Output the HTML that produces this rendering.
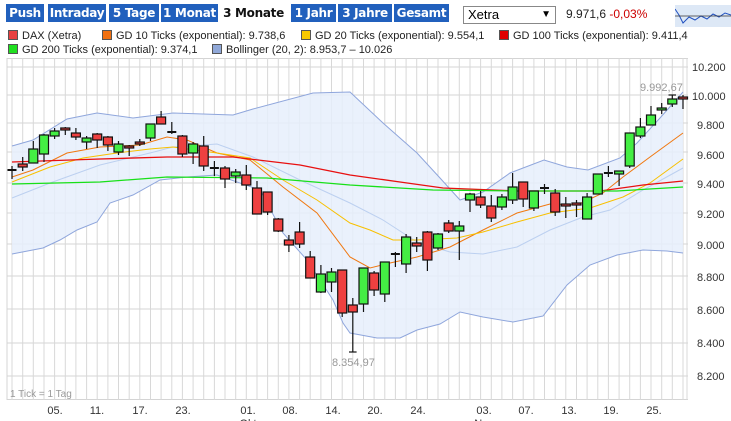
<!DOCTYPE html>
<html><head><meta charset="utf-8"><style>
body{margin:0;width:731px;height:421px;background:#fff;overflow:hidden;font-family:"Liberation Sans",Arial,sans-serif;position:relative}
.b{position:absolute;top:4px;height:18px;background:#2160bd;color:#fff;font-weight:bold;font-size:12px;line-height:18px;text-align:center;font-family:"DejaVu Sans","Liberation Sans",sans-serif;letter-spacing:-0.3px}
.b.a{background:#fff;color:#111}
.lg{position:absolute;font-size:11px;color:#222;white-space:nowrap}
.lg i{display:inline-block;width:8px;height:8px;border:1px solid #555;margin-right:4px;vertical-align:-1px}
</style></head><body>
<div class="b" style="left:6px;width:38px">Push</div>
<div class="b" style="left:48px;width:58px">Intraday</div>
<div class="b" style="left:109px;width:50px">5 Tage</div>
<div class="b" style="left:161px;width:57px">1 Monat</div>
<div class="b a" style="left:220px;width:67px">3 Monate</div>
<div class="b" style="left:291px;width:45px">1 Jahr</div>
<div class="b" style="left:338px;width:54px">3 Jahre</div>
<div class="b" style="left:394px;width:55px">Gesamt</div>
<div style="position:absolute;left:463px;top:6px;width:87px;height:16px;border:1px solid #888;font-size:13px;line-height:16px;padding-left:4px;box-sizing:content-box">Xetra<span style="position:absolute;right:4px;font-size:10px">▼</span></div>
<div style="position:absolute;left:566px;top:7px;font-size:12px;color:#222">9.971,6 <span style="color:#c00">-0,03%</span></div>
<svg style="position:absolute;left:675px;top:5px" width="56" height="22"><rect width="56" height="22" fill="#dde8f6"/><polyline points="0,4 4,10 8,18 14,12 20,15 26,11 32,14 38,9 44,12 50,8 56,10" fill="none" stroke="#2050c0" stroke-width="1"/><line x1="0" y1="11" x2="56" y2="11" stroke="#333" stroke-width="0.7"/></svg>
<div class="lg" style="left:8px;top:30px"><i style="background:#e84040"></i>DAX (Xetra)</div>
<div class="lg" style="left:102px;top:30px"><i style="background:#f07010"></i>GD 10 Ticks (exponential): 9.738,6</div>
<div class="lg" style="left:301px;top:30px"><i style="background:#f8c800"></i>GD 20 Ticks (exponential): 9.554,1</div>
<div class="lg" style="left:499px;top:30px"><i style="background:#e00000"></i>GD 100 Ticks (exponential): 9.411,4</div>
<div class="lg" style="left:8px;top:44px"><i style="background:#20e020"></i>GD 200 Ticks (exponential): 9.374,1</div>
<div class="lg" style="left:212px;top:44px"><i style="background:#90a8d8"></i>Bollinger (20, 2): 8.953,7 – 10.026</div>
<svg style="position:absolute;left:0;top:0" width="731" height="421" font-family="Liberation Sans,Arial,sans-serif">
<g stroke="#d4d4d4" stroke-width="1">
<line x1="7" y1="58" x2="7" y2="400"/>
<line x1="7" y1="399.5" x2="688" y2="399.5"/>
<line x1="7" y1="58.5" x2="688" y2="58.5"/>
<line x1="7" y1="67" x2="688" y2="67"/><line x1="7" y1="95" x2="688" y2="95"/><line x1="7" y1="123" x2="688" y2="123"/><line x1="7" y1="152" x2="688" y2="152"/><line x1="7" y1="183" x2="688" y2="183"/><line x1="7" y1="213" x2="688" y2="213"/><line x1="7" y1="244" x2="688" y2="244"/><line x1="7" y1="276" x2="688" y2="276"/><line x1="7" y1="309" x2="688" y2="309"/><line x1="7" y1="343" x2="688" y2="343"/><line x1="7" y1="376" x2="688" y2="376"/>
</g>
<g stroke="#d8d8d8" stroke-width="1">
<line x1="12" y1="58" x2="12" y2="400"/><line x1="22.7" y1="58" x2="22.7" y2="400"/><line x1="33.3" y1="58" x2="33.3" y2="400"/><line x1="44" y1="58" x2="44" y2="400"/><line x1="54.6" y1="58" x2="54.6" y2="400"/><line x1="65.3" y1="58" x2="65.3" y2="400"/><line x1="75.9" y1="58" x2="75.9" y2="400"/><line x1="86.6" y1="58" x2="86.6" y2="400"/><line x1="97.2" y1="58" x2="97.2" y2="400"/><line x1="107.9" y1="58" x2="107.9" y2="400"/><line x1="118.5" y1="58" x2="118.5" y2="400"/><line x1="129.2" y1="58" x2="129.2" y2="400"/><line x1="139.8" y1="58" x2="139.8" y2="400"/><line x1="150.5" y1="58" x2="150.5" y2="400"/><line x1="161.1" y1="58" x2="161.1" y2="400"/><line x1="171.8" y1="58" x2="171.8" y2="400"/><line x1="182.4" y1="58" x2="182.4" y2="400"/><line x1="193.1" y1="58" x2="193.1" y2="400"/><line x1="203.7" y1="58" x2="203.7" y2="400"/><line x1="214.4" y1="58" x2="214.4" y2="400"/><line x1="225" y1="58" x2="225" y2="400"/><line x1="235.7" y1="58" x2="235.7" y2="400"/><line x1="246.3" y1="58" x2="246.3" y2="400"/><line x1="257" y1="58" x2="257" y2="400"/><line x1="267.6" y1="58" x2="267.6" y2="400"/><line x1="278.3" y1="58" x2="278.3" y2="400"/><line x1="288.9" y1="58" x2="288.9" y2="400"/><line x1="299.6" y1="58" x2="299.6" y2="400"/><line x1="310.2" y1="58" x2="310.2" y2="400"/><line x1="320.9" y1="58" x2="320.9" y2="400"/><line x1="331.5" y1="58" x2="331.5" y2="400"/><line x1="342.2" y1="58" x2="342.2" y2="400"/><line x1="352.8" y1="58" x2="352.8" y2="400"/><line x1="363.5" y1="58" x2="363.5" y2="400"/><line x1="374.1" y1="58" x2="374.1" y2="400"/><line x1="384.8" y1="58" x2="384.8" y2="400"/><line x1="395.4" y1="58" x2="395.4" y2="400"/><line x1="406.1" y1="58" x2="406.1" y2="400"/><line x1="416.7" y1="58" x2="416.7" y2="400"/><line x1="427.4" y1="58" x2="427.4" y2="400"/><line x1="438" y1="58" x2="438" y2="400"/><line x1="448.7" y1="58" x2="448.7" y2="400"/><line x1="459.3" y1="58" x2="459.3" y2="400"/><line x1="470" y1="58" x2="470" y2="400"/><line x1="480.6" y1="58" x2="480.6" y2="400"/><line x1="491.3" y1="58" x2="491.3" y2="400"/><line x1="501.9" y1="58" x2="501.9" y2="400"/><line x1="512.6" y1="58" x2="512.6" y2="400"/><line x1="523.2" y1="58" x2="523.2" y2="400"/><line x1="533.9" y1="58" x2="533.9" y2="400"/><line x1="544.5" y1="58" x2="544.5" y2="400"/><line x1="555.2" y1="58" x2="555.2" y2="400"/><line x1="565.8" y1="58" x2="565.8" y2="400"/><line x1="576.5" y1="58" x2="576.5" y2="400"/><line x1="587.1" y1="58" x2="587.1" y2="400"/><line x1="597.8" y1="58" x2="597.8" y2="400"/><line x1="608.4" y1="58" x2="608.4" y2="400"/><line x1="619.1" y1="58" x2="619.1" y2="400"/><line x1="629.7" y1="58" x2="629.7" y2="400"/><line x1="640.4" y1="58" x2="640.4" y2="400"/><line x1="651" y1="58" x2="651" y2="400"/><line x1="661.7" y1="58" x2="661.7" y2="400"/><line x1="672.3" y1="58" x2="672.3" y2="400"/><line x1="683" y1="58" x2="683" y2="400"/><line x1="687" y1="58" x2="687" y2="400"/>
</g>
<!-- bollinger band -->
<polygon fill="#e6effb" fill-opacity="0.85" stroke="none" points="12,146 33,140 67,119 97,113 133,118 173,113 233,115 253,109 313,93 350,92 383,123 417,153 440,178 460,200 483,192 510,173 544,160 567,167 588,170 620,158 637,143 660,118 683,92 683,253 667,251 643,250 617,255 590,265 567,285 543,316 513,322 483,317 460,312 440,324 417,330 400,338 377,338 350,333 343,323 333,300 307,260 283,233 260,190 217,175 187,177 160,180 133,195 110,203 97,222 77,230 60,240 43,248 12,254"/>
<g fill="none" stroke-width="1">
<polyline stroke="#8fa6dc" points="12,146 33,140 67,119 97,113 133,118 173,113 233,115 253,109 313,93 350,92 383,123 417,153 440,178 460,200 483,192 510,173 544,160 567,167 588,170 620,158 637,143 660,118 683,92"/>
<polyline stroke="#8fa6dc" points="12,254 43,248 60,240 77,230 97,222 110,203 133,195 160,180 187,177 217,175 260,190 283,233 307,260 333,300 343,323 350,333 377,338 400,338 417,330 440,324 460,312 483,317 513,322 543,316 567,285 590,265 617,255 643,250 667,251 683,253"/>
<polyline stroke="#bcd0f0" points="12,198 50,183 100,165 150,153 173,147 217,144 253,157 300,180 350,203 383,220 417,242 450,252 483,254 517,247 550,230 583,217 610,210 643,190 683,168"/>
<polyline stroke="#f07810" points="12,177 33,170 67,153 100,147 140,145 167,137 187,140 217,153 250,160 283,187 317,213 350,257 370,268 390,263 417,257 450,247 483,230 517,213 550,204 577,205 603,193 623,177 650,157 683,133"/>
<polyline stroke="#f8c000" points="12,182 50,167 83,158 117,153 150,149 173,147 217,153 250,158 283,180 317,200 350,223 370,230 393,240 417,240 457,238 483,232 517,222 550,213 590,208 623,197 650,183 683,159"/>
<polyline stroke="#e81010" stroke-width="1.3" points="12,162 100,159 167,157 233,157 300,165 350,175 400,182 443,188 517,191 600,191 643,185 683,181"/>
<polyline stroke="#18e018" stroke-width="1.3" points="12,184 100,182 167,177 267,178 350,185 433,190 517,191 617,191 683,187"/>
</g>
<!-- candles -->
<g stroke="#111" stroke-width="1.2">
<line x1="12" y1="166" x2="12" y2="179"/><line x1="7.5" y1="170" x2="16.5" y2="170" stroke-width="2"/>
<line x1="22.7" y1="157" x2="22.7" y2="171"/><rect x="18.2" y="164" width="9" height="3" fill="#ee4040"/>
<line x1="33.3" y1="141" x2="33.3" y2="163"/><rect x="28.8" y="149" width="9" height="14" fill="#44ee44"/>
<line x1="44" y1="134" x2="44" y2="162"/><rect x="39.5" y="135" width="9" height="19" fill="#44ee44"/>
<line x1="54.6" y1="128" x2="54.6" y2="139"/><rect x="50.1" y="131" width="9" height="5" fill="#44ee44"/>
<line x1="65.3" y1="127" x2="65.3" y2="135"/><rect x="60.8" y="128" width="9" height="2" fill="#ee4040"/>
<line x1="75.9" y1="128" x2="75.9" y2="140"/><rect x="71.4" y="133" width="9" height="4" fill="#ee4040"/>
<line x1="86.6" y1="136" x2="86.6" y2="149"/><rect x="82.1" y="138" width="9" height="4" fill="#44ee44"/>
<line x1="97.2" y1="133" x2="97.2" y2="148"/><rect x="92.7" y="134" width="9" height="6" fill="#ee4040"/>
<line x1="107.9" y1="136" x2="107.9" y2="151"/><rect x="103.4" y="137" width="9" height="8" fill="#ee4040"/>
<line x1="118.5" y1="141" x2="118.5" y2="155"/><rect x="114" y="144" width="9" height="8" fill="#44ee44"/>
<line x1="129.2" y1="145" x2="129.2" y2="156"/><rect x="124.7" y="146" width="9" height="2" fill="#ee4040"/>
<line x1="139.8" y1="139" x2="139.8" y2="146"/><rect x="135.3" y="142" width="9" height="2" fill="#ee4040"/>
<line x1="150.5" y1="124" x2="150.5" y2="141"/><rect x="146" y="124" width="9" height="14" fill="#44ee44"/>
<line x1="161.1" y1="111" x2="161.1" y2="124"/><rect x="156.6" y="117" width="9" height="7" fill="#ee4040"/>
<line x1="171.8" y1="122" x2="171.8" y2="134"/><line x1="167.3" y1="132" x2="176.3" y2="132" stroke-width="2"/>
<line x1="182.4" y1="135" x2="182.4" y2="157"/><rect x="177.9" y="136" width="9" height="18" fill="#ee4040"/>
<line x1="193.1" y1="142" x2="193.1" y2="164"/><rect x="188.6" y="144" width="9" height="9" fill="#44ee44"/>
<line x1="203.7" y1="136" x2="203.7" y2="171"/><rect x="199.2" y="146" width="9" height="20" fill="#ee4040"/>
<line x1="214.4" y1="161" x2="214.4" y2="176"/><line x1="209.9" y1="168" x2="218.9" y2="168" stroke-width="2"/>
<line x1="225" y1="166" x2="225" y2="188"/><rect x="220.5" y="168" width="9" height="11" fill="#ee4040"/>
<line x1="235.7" y1="169" x2="235.7" y2="183"/><rect x="231.2" y="172" width="9" height="4" fill="#44ee44"/>
<line x1="246.3" y1="165" x2="246.3" y2="190"/><rect x="241.8" y="175" width="9" height="10" fill="#ee4040"/>
<line x1="257" y1="181" x2="257" y2="214"/><rect x="252.5" y="188" width="9" height="26" fill="#ee4040"/>
<line x1="267.6" y1="192" x2="267.6" y2="215"/><rect x="263.1" y="192" width="9" height="20" fill="#ee4040"/>
<line x1="278.3" y1="218" x2="278.3" y2="232"/><rect x="273.8" y="219" width="9" height="12" fill="#ee4040"/>
<line x1="288.9" y1="235" x2="288.9" y2="252"/><rect x="284.4" y="240" width="9" height="5" fill="#ee4040"/>
<line x1="299.6" y1="222" x2="299.6" y2="248"/><rect x="295.1" y="232" width="9" height="12" fill="#ee4040"/>
<line x1="310.2" y1="251" x2="310.2" y2="278"/><rect x="305.7" y="257" width="9" height="21" fill="#ee4040"/>
<line x1="320.9" y1="265" x2="320.9" y2="293"/><rect x="316.4" y="274" width="9" height="18" fill="#44ee44"/>
<line x1="331.5" y1="268" x2="331.5" y2="292"/><rect x="327" y="272" width="9" height="10" fill="#44ee44"/>
<line x1="342.2" y1="270" x2="342.2" y2="317"/><rect x="337.7" y="270" width="9" height="43" fill="#ee4040"/>
<line x1="352.8" y1="298" x2="352.8" y2="352"/><rect x="348.3" y="305" width="9" height="7" fill="#ee4040"/><line x1="349" y1="352" x2="356.6" y2="352"/>
<line x1="363.5" y1="268" x2="363.5" y2="312"/><rect x="359" y="268" width="9" height="36" fill="#44ee44"/>
<line x1="374.1" y1="271" x2="374.1" y2="296"/><rect x="369.6" y="273" width="9" height="17" fill="#ee4040"/>
<line x1="384.8" y1="262" x2="384.8" y2="302"/><rect x="380.3" y="262" width="9" height="32" fill="#44ee44"/>
<line x1="395.4" y1="252" x2="395.4" y2="267"/><line x1="390.9" y1="254" x2="399.9" y2="254" stroke-width="2"/>
<line x1="406.1" y1="234" x2="406.1" y2="273"/><rect x="401.6" y="237" width="9" height="27" fill="#44ee44"/>
<line x1="416.7" y1="237" x2="416.7" y2="252"/><rect x="412.2" y="243" width="9" height="3" fill="#ee4040"/>
<line x1="427.4" y1="231" x2="427.4" y2="271"/><rect x="422.9" y="232" width="9" height="28" fill="#ee4040"/>
<line x1="438" y1="233" x2="438" y2="250"/><rect x="433.5" y="234" width="9" height="14" fill="#44ee44"/>
<line x1="448.7" y1="220" x2="448.7" y2="233"/><rect x="444.2" y="223" width="9" height="8" fill="#ee4040"/>
<line x1="459.3" y1="221" x2="459.3" y2="260"/><rect x="454.8" y="226" width="9" height="5" fill="#44ee44"/>
<line x1="470" y1="193" x2="470" y2="212"/><rect x="465.5" y="194" width="9" height="6" fill="#44ee44"/>
<line x1="480.6" y1="191" x2="480.6" y2="208"/><rect x="476.1" y="197" width="9" height="8" fill="#ee4040"/>
<line x1="491.3" y1="195" x2="491.3" y2="222"/><rect x="486.8" y="206" width="9" height="12" fill="#ee4040"/>
<line x1="501.9" y1="194" x2="501.9" y2="210"/><rect x="497.4" y="197" width="9" height="10" fill="#44ee44"/>
<line x1="512.6" y1="173" x2="512.6" y2="204"/><rect x="508.1" y="187" width="9" height="13" fill="#44ee44"/>
<line x1="523.2" y1="182" x2="523.2" y2="207"/><rect x="518.7" y="182" width="9" height="17" fill="#ee4040"/>
<line x1="533.9" y1="191" x2="533.9" y2="211"/><rect x="529.4" y="191" width="9" height="17" fill="#44ee44"/>
<line x1="544.5" y1="184" x2="544.5" y2="194"/><line x1="540" y1="188" x2="549" y2="188" stroke-width="2"/>
<line x1="555.2" y1="189" x2="555.2" y2="216"/><rect x="550.7" y="193" width="9" height="19" fill="#ee4040"/>
<line x1="565.8" y1="197" x2="565.8" y2="218"/><rect x="561.3" y="204" width="9" height="2" fill="#ee4040"/>
<line x1="576.5" y1="200" x2="576.5" y2="217"/><rect x="572" y="203" width="9" height="2" fill="#ee4040"/>
<line x1="587.1" y1="193" x2="587.1" y2="219"/><rect x="582.6" y="197" width="9" height="22" fill="#44ee44"/>
<line x1="597.8" y1="174" x2="597.8" y2="194"/><rect x="593.3" y="174" width="9" height="20" fill="#44ee44"/>
<line x1="608.4" y1="166" x2="608.4" y2="177"/><line x1="603.9" y1="173" x2="612.9" y2="173" stroke-width="2"/>
<line x1="619.1" y1="171" x2="619.1" y2="186"/><rect x="614.6" y="171" width="9" height="3" fill="#44ee44"/>
<line x1="629.7" y1="133" x2="629.7" y2="168"/><rect x="625.2" y="133" width="9" height="33" fill="#44ee44"/>
<line x1="640.4" y1="118" x2="640.4" y2="138"/><rect x="635.9" y="127" width="9" height="9" fill="#44ee44"/>
<line x1="651" y1="106" x2="651" y2="125"/><rect x="646.5" y="115" width="9" height="10" fill="#44ee44"/>
<line x1="661.7" y1="103" x2="661.7" y2="114"/><rect x="657.2" y="108" width="9" height="2" fill="#44ee44"/>
<line x1="672.3" y1="95" x2="672.3" y2="107"/><rect x="667.8" y="99" width="9" height="5" fill="#44ee44"/><line x1="668.5" y1="95" x2="676" y2="95"/>
<line x1="683" y1="95" x2="683" y2="109"/><rect x="678.5" y="97" width="9" height="2" fill="#ee4040"/>
</g>
<g font-size="11" fill="#999">
<text x="640" y="91">9.992,67</text>
<text x="332" y="366">8.354,97</text>
<text x="10" y="397" font-size="10">1 Tick = 1 Tag</text>
</g>
<g font-size="11" fill="#333">
<text x="692" y="71">10.200</text><text x="692" y="100">10.000</text><text x="697" y="129">9.800</text><text x="697" y="159">9.600</text><text x="697" y="188">9.400</text><text x="697" y="218">9.200</text><text x="697" y="249">9.000</text><text x="697" y="281">8.800</text><text x="697" y="314">8.600</text><text x="697" y="347">8.400</text><text x="697" y="380">8.200</text>
</g>
<g font-size="11" fill="#333" text-anchor="middle">
<text x="55" y="414">05.</text><text x="97" y="414">11.</text><text x="140" y="414">17.</text><text x="183" y="414">23.</text><text x="248" y="414">01.</text><text x="290" y="414">08.</text><text x="333" y="414">14.</text><text x="375" y="414">20.</text><text x="418" y="414">24.</text><text x="484" y="414">03.</text><text x="526" y="414">07.</text><text x="569" y="414">13.</text><text x="611" y="414">19.</text><text x="654" y="414">25.</text>
<text x="248" y="427">Okt</text><text x="484" y="427">Nov</text>
</g>
</svg>
</body></html>
